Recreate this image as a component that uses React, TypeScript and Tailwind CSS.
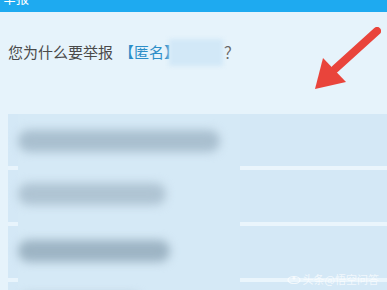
import React from 'react';

const rows = [
  { bar: 'w-[202px]', top: 'mt-[16px]', tone: 'bg-[#a9bfcf]' },
  { bar: 'w-[148px]', top: 'mt-[13px]', tone: 'bg-[#afc4d3]' },
  { bar: 'w-[152px]', top: 'mt-[14px]', tone: 'bg-[#9db4c4]' },
  { bar: 'w-[125px]', top: 'mt-[12px]', tone: 'bg-[#b3c7d5]' },
];

const App: React.FC = () => {
  return (
    <div
      className="relative w-[387px] h-[290px] overflow-hidden bg-[#e6f3fb]"
      style={{ fontFamily: '"Noto Sans CJK SC", "Noto Sans", sans-serif' }}
    >
      {/* header, top cut off */}
      <div className="h-[12px] bg-[#1eaaf0] overflow-hidden">
        <span className="block -mt-[10px] ml-[3px] text-[13px] leading-[16px] text-white">举报</span>
      </div>

      {/* question */}
      <div className="flex items-center h-[28px] mt-[26px] pl-[8px] text-[15px] text-[#4a4a4a]">
        <span>您为什么要举报</span>
        <span className="ml-[6px] text-[#2c8ec8]">【匿名】</span>
        <span className="-ml-[10px] w-[54px] h-[27px] bg-[#d2e8f7] blur-[2px]" />
        <span className="ml-[1px] text-[#666]">？</span>
      </div>

      {/* options */}
      <div className="mt-[48px] pl-[8px] flex flex-col">
        {rows.map((r, i) => (
          <div key={i} className="flex h-[56px]">
            <div className="w-[10px] flex flex-col">
              <div className="h-[52px] bg-[#d4e8f6]" />
              <div className="h-[4px] bg-[#e8f4fc]" />
            </div>
            <div className="w-[222px] bg-[#d5e9f6]">
              <div className={`${r.top} ${r.bar} ${r.tone} h-[22px] rounded-full blur-[5px]`} />
            </div>
            <div className="flex-1 flex flex-col">
              <div className="h-[52px] bg-[#d4e8f6]" />
              <div className="h-[4px] bg-[#eaf5fc]" />
            </div>
          </div>
        ))}
      </div>

      {/* red arrow */}
      <svg className="absolute left-[305px] top-[22px] blur-[0.6px]" width="80" height="75" viewBox="0 0 80 75">
        <line x1="72" y1="9" x2="30" y2="47" stroke="#e9443b" strokeWidth="8" strokeLinecap="round" />
        <polygon points="10,67 18,36 41,60" fill="#e9443b" />
      </svg>

      {/* watermark */}
      <div className="absolute right-[8px] bottom-[5px] flex items-center gap-[2px] text-[11px] leading-[12px] text-white/70">
        <svg width="14" height="10" viewBox="0 0 14 10">
          <ellipse cx="7" cy="6" rx="6" ry="3.5" fill="none" stroke="white" strokeOpacity="0.7" strokeWidth="1.2" />
          <circle cx="7" cy="4" r="1.6" fill="white" fillOpacity="0.7" />
        </svg>
        <span>头条@悟空问答</span>
      </div>
    </div>
  );
};

export default App;
